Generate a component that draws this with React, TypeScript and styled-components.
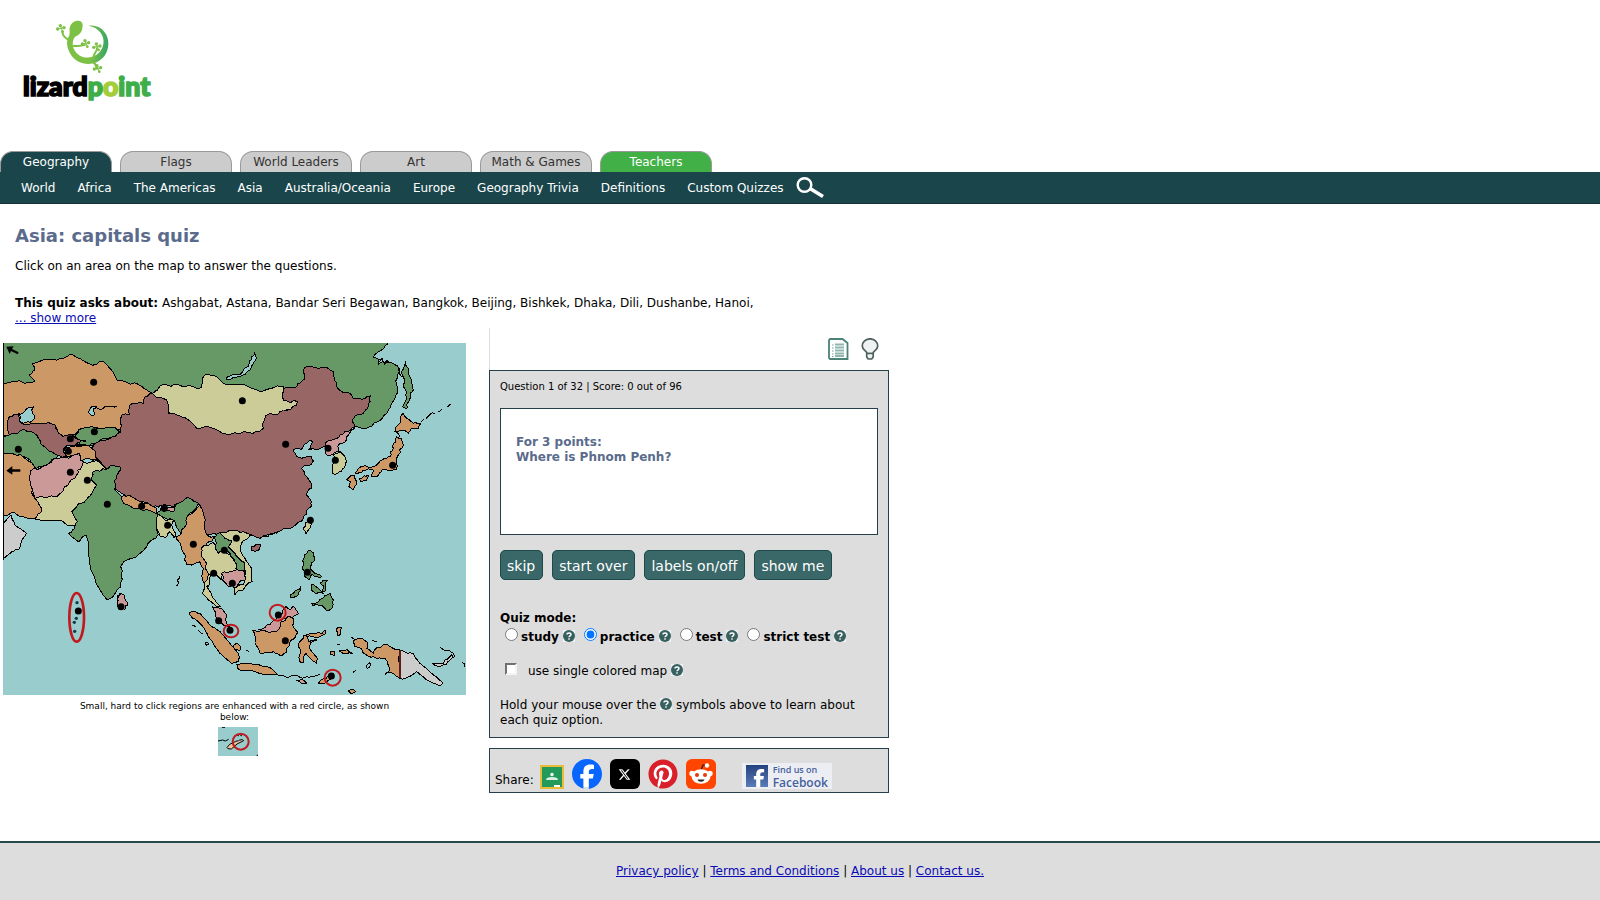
import React from "react";
import styled, { createGlobalStyle } from "styled-components";
import { FaFacebook, FaFacebookF, FaPinterest, FaXTwitter } from "react-icons/fa6";

const teal = "#1a464b";

const Global = createGlobalStyle`
  *, *::before, *::after { box-sizing: border-box; }
  body {
    margin: 0;
    background: #fff;
    color: #000;
    font-family: "DejaVu Sans", Verdana, sans-serif;
    font-size: 12px;
    line-height: 15px;
  }
  a { color: #0a0ab4; }
  svg { display: block; }
`;

const Page = styled.div`
  min-height: 100vh;
  display: flex;
  flex-direction: column;
`;

const Header = styled.header`
  padding: 16px 20px 45px;
`;

const LogoLink = styled.a`
  display: inline-block;
  vertical-align: top;
`;

const Tabs = styled.nav`
  display: flex;
  gap: 8px;
`;

const Tab = styled.a<{ $bg: string; $fg: string }>`
  width: 112px;
  height: 21px;
  border: 1px solid #999;
  border-bottom: 0;
  border-radius: 13px 13px 0 0;
  background: ${(p) => p.$bg};
  color: ${(p) => p.$fg};
  text-align: center;
  text-decoration: none;
  line-height: 20px;
`;

const SubNav = styled.nav`
  display: flex;
  align-items: center;
  gap: 22px;
  height: 32px;
  padding-left: 21px;
  background: ${teal};
  border-bottom: 1px solid #123539;
`;

const SubLink = styled.a`
  padding-top: 2px;
  color: #fff;
  text-decoration: none;
`;

const SearchButton = styled.button`
  margin: 0 0 0 -10px;
  padding: 0;
  border: 0;
  background: none;
`;

const Main = styled.main`
  flex: 1 0 auto;
`;

const Intro = styled.section`
  padding: 21px 15px 2px;
`;

const Title = styled.h1`
  margin: 0 0 12px;
  font-size: 18px;
  line-height: 22px;
  color: #5a6b8c;
`;

const Lead = styled.p`
  margin: 0 0 22px;
`;

const Asks = styled.p`
  margin: 0;
`;

const Columns = styled.div`
  display: flex;
  align-items: flex-start;
  gap: 23px;
  padding-left: 3px;
`;

const MapColumn = styled.section`
  width: 463px;
  padding-top: 15px;
  display: flex;
  flex-direction: column;
  align-items: center;
`;

const Caption = styled.p`
  width: 340px;
  margin: 6px 0 4px;
  font-size: 9px;
  line-height: 11px;
  text-align: center;
`;

const Sample = styled.div`
  padding-left: 7px;
`;

const QuizColumn = styled.section`
  width: 400px;
`;

const Tools = styled.div`
  display: flex;
  justify-content: flex-end;
  align-items: center;
  gap: 12px;
  height: 42px;
  padding-right: 10px;
  border-left: 1px solid #ddd;
`;

const IconButton = styled.button`
  padding: 0;
  border: 0;
  background: none;
`;

const Panel = styled.div`
  border: 1px solid #25404a;
  background: #ddd;
`;

const QuizPanel = styled(Panel)`
  padding: 8px 10px;
`;

const Score = styled.p`
  margin: 0 0 14px;
  font-size: 10px;
`;

const QuestionBox = styled.div`
  height: 127px;
  padding: 26px 15px;
  border: 1px solid #25404a;
  background: #fff;
  color: #5a6b8c;
  font-weight: bold;
`;

const Buttons = styled.div`
  display: flex;
  gap: 9px;
  margin: 15px 0 31px;
`;

const ActionButton = styled.button`
  height: 30px;
  padding: 2px 7px 0 6px;
  border: 1px solid #1d4a4c;
  border-radius: 5px;
  background: #3a6767;
  color: #fff;
  font-family: inherit;
  font-size: 14px;
`;

const Modes = styled.fieldset`
  margin: 0;
  padding: 0;
  border: 0;
  font-weight: bold;
`;

const Legend = styled.legend`
  padding: 0;
`;

const ModeRow = styled.div`
  display: flex;
  gap: 9px;
  padding: 2px 0 0 5px;
`;

const Option = styled.span`
  display: flex;
  align-items: flex-start;
  gap: 4px;
  > svg { margin-top: 2px; }
`;

const OptionLabel = styled.label<{ $gap: number }>`
  display: flex;
  align-items: flex-start;
  gap: ${(p) => p.$gap}px;
  line-height: 18px;
`;

const Radio = styled.input`
  width: 13px;
  height: 13px;
  margin: 0;
`;

const Check = styled.input`
  appearance: none;
  width: 12px;
  height: 12px;
  margin: 1px 0 0;
  border: 2px solid;
  border-color: #707070 #f4f4f4 #f4f4f4 #707070;
  background: #fff;
`;

const CheckRow = styled.div`
  margin-top: 16px;
  padding-left: 5px;
`;

const Help = styled.p`
  margin: 18px 0 1px;
  svg { display: inline-block; vertical-align: -1px; }
`;

const SharePanel = styled(Panel)`
  display: flex;
  align-items: flex-end;
  gap: 8px;
  height: 45px;
  margin-top: 10px;
  padding: 0 5px 3px;
`;

const ShareLabel = styled.span`
  margin-right: -2px;
  padding-bottom: 1px;
`;

const ShareLink = styled.a<{ $bg?: string; $radius?: number }>`
  display: flex;
  align-items: center;
  justify-content: center;
  width: 30px;
  height: 30px;
  background: ${(p) => p.$bg || "transparent"};
  border-radius: ${(p) => p.$radius || 0}px;
  color: #fff;
`;

const ClassroomLink = styled.a`
  display: block;
`;

const FindUs = styled.a`
  display: flex;
  align-items: center;
  gap: 5px;
  width: 90px;
  height: 26px;
  margin-left: 18px;
  padding-left: 4px;
  background: #eceef3;
  color: #45619d;
  font-family: "Open Sans", sans-serif;
  font-weight: 600;
  text-decoration: none;
`;

const FindText = styled.span`
  display: flex;
  flex-direction: column;
  font-size: 12px;
  line-height: 13px;
  small { font-size: 9px; line-height: 12px; }
`;

const FindIcon = styled.span`
  display: flex;
  align-items: flex-end;
  justify-content: flex-end;
  width: 22px;
  height: 22px;
  background: linear-gradient(#24427e, #5b7cb8);
  color: #fff;
`;

const Footer = styled.footer`
  margin-top: 48px;
  padding: 21px 0 21px;
  border-top: 2px solid #25494d;
  background: #ddd;
  text-align: center;
`;

type Pt = [number, number];

const parse = (s: string, dx = 0, dy = 0): Pt[] =>
  s.trim().split(/\s+/).map((p) => {
    const [x, y] = p.split(",").map(Number);
    return [x + dx, y + dy];
  });

/* Splits each edge at a shifted midpoint; neighbours that share an edge get the same shift. */
const roughen = (pts: Pt[], closed: boolean, passes = 2): Pt[] => {
  if (passes === 0) return pts;
  const out: Pt[] = [];
  pts.forEach((a, i) => {
    out.push(a);
    if (!closed && i === pts.length - 1) return;
    const b = pts[(i + 1) % pts.length];
    const dx = Math.abs(a[0] - b[0]);
    const dy = Math.abs(a[1] - b[1]);
    const len = Math.hypot(dx, dy);
    if (len < 10 || a[0] < 10 || b[0] < 10) return;
    const mx = (a[0] + b[0]) / 2;
    const my = (a[1] + b[1]) / 2;
    const h = Math.sin(mx * 12.9 + my * 78.2) * 43758;
    const k = ((h - Math.floor(h)) - 0.5) * Math.min(len * 0.45, 11);
    out.push([mx + (k * dy) / len, my + (k * dx) / len]);
  });
  return roughen(out, closed, passes - 1);
};

const toPoints = (pts: Pt[]) => pts.map((p) => `${p[0].toFixed(1)},${p[1].toFixed(1)}`).join(" ");

const G = "#669966";
const O = "#cc9966";
const M = "#996666";
const C = "#cccc99";
const P = "#cc9999";
const S = "#99cccc";
const L = "#cccccc";

/* fill, x shift, y shift, outline */
const lands: [string, number, number, string][] = [
  [G, 0, 0, "9,20 1165,20 1145,45 1120,66 1138,74 1135,88 1150,80 1172,82 1192,92 1200,105 1190,150 1187,182 1172,212 1160,235 1130,262 1115,275 1090,280 1065,275 700,330 9,330"],
  [C, 0, 0, "457,175 475,160 500,150 525,147 555,155 605,157 610,125 625,117 650,125 670,145 690,148 730,148 780,170 815,160 850,155 850,195 893,200 897,213 850,235 800,260 790,300 690,310 560,290"],
  [M, 0, 0, "457,175 470,188 500,195 505,235 540,243 575,262 590,280 640,280 690,298 745,292 790,280 797,243 830,240 850,225 890,212 893,200 850,195 850,160 885,158 905,140 915,120 910,105 935,95 980,97 1000,110 1010,145 1015,162 1050,175 1060,192 1090,192 1112,182 1105,215 1090,235 1062,248 1063,275 1040,292 1020,305 995,320 970,335 925,345 935,315 920,325 905,345 880,345 890,365 905,370 935,365 940,378 905,400 915,420 930,440 935,460 920,480 935,500 925,520 910,550 880,575 830,592 780,610 755,600 730,590 690,585 660,595 620,600 612,565 608,525 600,510 570,490 545,500 520,515 490,510 460,515 400,490 375,480 343,462 343,440 355,415 360,395 345,393 320,403 305,385 290,370 270,340 285,325 345,300 362,285 365,240 388,240 390,210 430,205 435,185"],
  [O, 0, 0, "5,148 45,138 75,145 105,140 88,120 105,105 97,85 150,75 190,72 210,57 235,70 265,85 290,90 310,78 330,100 350,135 385,145 410,145 440,165 457,175 435,185 430,205 390,210 388,240 365,240 362,285 290,278 235,285 220,300 190,305 180,300 165,270 105,268 95,265 60,262 28,245 28,300 5,303"],
  [M, 0, 0, "28,245 58,235 60,262 95,265 165,270 175,295 190,305 215,298 230,312 258,318 230,325 200,330 190,340 198,365 175,362 150,350 125,330 110,300 85,290 65,285 50,297 28,300"],
  [S, 0, 0, "58,240 75,228 100,215 97,235 105,242 90,262 70,265 58,260"],
  [S, 0, 0, "265,232 275,215 290,213 280,222 285,238 275,242"],
  [G, 0, 0, "5,306 28,300 50,297 65,285 85,290 110,300 125,330 150,350 175,362 160,372 145,388 110,400 97,395 90,375 60,358 30,355 5,357"],
  [G, 0, 0, "235,285 255,278 345,278 358,290 330,308 285,325 265,332 220,332 240,322 258,318 225,305"],
  [O, 0, 0, "190,340 215,335 265,332 285,348 290,372 245,378 240,360 215,362 200,365"],
  [O, 0, 0, "5,357 30,355 60,358 97,385 103,400 90,420 92,450 98,480 105,490 125,525 105,552 60,545 40,532 25,540 5,542"],
  [P, 0, 0, "103,400 140,390 160,372 195,368 238,355 242,365 240,378 250,380 245,395 230,420 205,450 170,485 105,490 92,450 90,420"],
  [C, 0, 0, "105,490 170,485 205,450 230,420 245,395 250,380 290,375 320,403 278,412 275,435 290,450 262,490 215,530 233,560 225,572 205,572 180,555 105,552 125,525"],
  [G, 0, 0, "320,403 345,393 360,395 355,415 343,440 343,462 365,485 370,500 430,520 470,535 485,515 520,518 545,500 570,490 595,505 588,520 565,540 555,575 540,600 525,560 485,545 472,540 470,570 475,600 455,615 420,655 362,695 362,745 340,783 322,795 300,765 270,690 258,600 235,620 205,595 225,572 233,560 215,530 262,490 290,450 275,435 278,412"],
  [O, 0, 0, "365,485 385,480 420,500 468,518 468,535 430,527 370,505"],
  [P, 0, 0, "485,516 522,516 522,530 490,530"],
  [C, 0, 0, "472,535 485,545 495,555 525,555 515,570 527,600 522,610 510,590 495,608 480,603 470,580"],
  [O, 0, 0, "600,510 608,525 612,565 620,600 645,605 620,625 603,640 605,660 618,690 628,720 625,755 612,745 610,700 600,680 580,688 560,688 555,660 540,625 528,605 540,600 555,575 565,540 590,518"],
  [C, 0, 0, "660,595 690,585 730,590 755,600 735,615 720,640 735,670 755,700 757,740 730,765 705,780 700,755 735,740 735,705 725,680 690,640 665,610"],
  [C, 0, 0, "603,640 640,622 655,645 690,660 705,680 715,710 670,712 665,735 640,710 630,725 620,755 640,790 662,815 650,815 625,795 608,775 612,745 628,720 618,690 605,660"],
  [G, 0, 0, "643,608 660,592 675,610 695,615 685,635 715,670 735,685 733,708 710,706 705,680 690,655 670,645 655,655 645,640 650,625"],
  [P, 0, 0, "665,715 700,708 735,710 735,735 705,758 685,755 668,735"],
  [P, 0, 0, "637,815 665,820 680,840 680,865 690,880 670,870 650,850"],
  [L, 0, 525, "5,45 33,15 45,45 80,70 55,120 30,130 5,150"],
  [P, 0, 525, "358,250 372,255 384,280 375,298 360,298 352,280"],
  [G, 690, 0, "525,78 535,100 545,140 550,165 540,175 537,200 530,222 518,215 527,180 520,150 515,110"],
  [O, 690, 0, "520,235 530,250 550,265 572,265 565,280 545,280 535,295 515,285 495,290 510,265"],
  [O, 690, 0, "500,305 515,310 520,330 505,360 500,385 500,402 480,408 455,405 440,425 425,425 430,405 400,405 375,415 385,400 430,395 445,385 455,375 480,365 490,340 498,320"],
  [O, 690, 0, "355,430 375,420 380,440 370,465 357,455 362,440 350,435"],
  [O, 690, 0, "390,430 415,420 410,435 393,440"],
  [P, 690, 0, "375,278 355,300 350,310 335,325 325,330 325,350 300,362 285,355 295,335 285,330 305,315 330,300 350,290"],
  [C, 690, 0, "310,358 330,350 345,365 347,390 335,408 308,415 308,395 312,375"],
  [C, 690, 0, "240,560 235,585 228,598 220,580 225,565"],
  [S, 690, 0, "75,50 77,75 60,105 30,125 -10,133 -10,127 30,118 55,95 65,65"],
  [M, 540, 525, "213,110 230,102 243,102 240,112 225,125 213,122"],
  [G, 540, 525, "372,135 385,122 402,130 400,155 390,175 405,190 425,200 420,204 395,192 388,210 375,200 368,170"],
  [G, 540, 525, "393,222 415,235 430,250 408,252 395,240"],
  [G, 540, 525, "430,210 443,212 438,240 425,245 432,228 420,220"],
  [G, 540, 525, "395,280 420,268 450,250 460,270 455,295 440,302 425,285 400,288"],
  [G, 540, 525, "330,262 350,240 363,228 362,240 340,262"],
  [O, 540, 525, "28,307 60,310 90,345 120,365 150,400 175,430 175,455 155,460 120,430 85,380 60,340 35,322"],
  [O, 540, 525, "162,405 175,402 183,412 178,422 165,420"],
  [O, 540, 525, "170,463 200,462 250,470 280,480 292,493 250,493 190,483 172,475"],
  [O, 540, 525, "217,360 235,365 280,360 310,335 330,320 340,325 338,345 353,368 335,390 325,410 305,437 280,425 240,430 225,400"],
  [P, 540, 525, "235,360 260,345 290,325 318,290 330,300 340,288 355,310 338,323 310,325 295,360 260,365"],
  [O, 540, 525, "370,375 400,370 425,372 438,360 435,375 415,382 380,380 385,395 412,390 390,405 395,425 412,445 410,460 395,450 378,430 370,458 360,455 362,430 355,410"],
  [O, 540, 525, "470,355 485,352 482,372 475,378"],
  [O, 540, 525, "478,423 500,418 517,430 500,430"],
  [O, 540, 525, "450,425 465,425 463,436 452,434"],
  [O, 540, 525, "415,520 425,508 445,498 460,490 455,503 430,520"],
  [P, 540, 525, "350,512 370,510 380,520 365,520"],
  [O, 540, 525, "520,392 545,385 560,395 560,415 580,430 610,403 660,420 660,505 640,490 615,493 628,475 615,445 580,440 550,430 545,415 525,410"],
  [L, 540, 525, "660,420 700,430 720,460 755,490 788,518 780,528 740,510 710,485 690,500 660,505"],
  [L, 540, 525, "757,460 790,460 815,435 820,442 800,462 765,466"],
  [O, 540, 525, "505,543 520,538 527,545 512,550"],
  [S, 540, 525, "558,470 570,458 572,465 562,476"],
  [S, 540, 525, "76,398 83,396 85,404 79,406"],
];

const strokes: [number, number, string][] = [
  [0, 0, "285,216 310,220 335,214 350,213"],
  [690, 0, "500,290 508,305"],
  [690, 0, "575,260 583,253"],
  [690, 0, "588,250 600,238 616,235"],
  [690, 0, "625,230 637,221"],
  [690, 0, "650,215 662,206"],
  [690, 0, "508,100 515,125"],
  [690, 0, "448,80 456,68 462,90 470,75 477,82"],
  [540, 525, "780,412 800,422 820,430 825,442"],
  [540, 525, "846,458 855,462 852,472"],
  [540, 525, "295,495 315,500 345,498 375,502 400,500 420,495"],
  [540, 525, "512,382 522,387"],
  [540, 525, "575,392 592,395"],
  [540, 525, "470,403 480,405"],
  [540, 525, "520,490 527,482"],
  [540, 525, "35,345 48,350"],
  [540, 525, "55,362 68,372"],
  [540, 525, "198,420 206,424"],
  [540, 525, "250,80 275,70 295,68"],
  [0, 525, "530,228 533,210 538,198"],
  [0, 525, "350,262 362,252"],
];

const capitals =
  "281,142 211,311 283,290 55,343 205,349 211,412 262,436 322,508 425,514 493,520 503,571 727,197 857,328 984,340 1006,376 1178,391 931,556 580,628 673,646 709,610 641,715 697,745 922,712 363,815 235,828 656,857 690,886 835,840 856,917 994,1023";

function AsiaMap() {
  return (
    <svg width="463" height="352" viewBox="9 24 1389 1056" role="img" aria-label="Map of Asia">
      <rect x="9" y="24" width="1389" height="1056" fill={S} />
      <g stroke="#000" strokeWidth="3" strokeLinejoin="round" shapeRendering="crispEdges">
        {lands.map(([fill, dx, dy, s], i) => (
          <polygon key={i} fill={fill} points={toPoints(roughen(parse(s, dx, dy), true))} />
        ))}
        {strokes.map(([dx, dy, s], i) => (
          <polyline key={i} fill="none" points={toPoints(roughen(parse(s, dx, dy), false))} />
        ))}
        <path d="M1200 945v85" stroke="#5c1a1a" strokeWidth="4" />
        <path d="M10.500 24V675" />
      </g>
      {parse(capitals).map(([x, y]) => (
        <circle key={`${x}-${y}`} cx={x} cy={y} r="10.500" />
      ))}
      <g fill="#123a4a">
        <circle cx="231" cy="803" r="5" />
        <circle cx="229" cy="850" r="5" />
        <circle cx="223" cy="862" r="5" />
        <circle cx="224" cy="889" r="5" />
      </g>
      <path d="M19 35l22-1-5 8 20 10-3 6-20-10-4 9zM19 407l18-14v10h24v7H37v9z" />
      <g fill="none" stroke="#c01a1f" strokeWidth="6">
        <ellipse cx="230" cy="847" rx="22" ry="73" strokeWidth="8" />
        <ellipse cx="693" cy="888" rx="22" ry="19" />
        <circle cx="833" cy="833" r="24" />
        <circle cx="998" cy="1028" r="24" />
      </g>
    </svg>
  );
}

function SampleMap() {
  return (
    <svg width="40" height="29" viewBox="0 0 120 87" role="img" aria-label="Region with a red circle">
      <rect width="120" height="87" fill={S} />
      <g stroke="#000" strokeWidth="3" fill="none">
        <path d="M0 42l14-3 8 3 10-5" />
        <path d="M27 62l8-10 15-7 22-8 5 4-20 10-17 15-10-1z" fill="#f2c79a" />
        <path d="M48 44l25-6" stroke="#556" />
        <path d="M12 1h9M55 22l8 5M64 22l8 5M116 85h4" />
      </g>
      <circle cx="68" cy="44" r="24" fill="none" stroke="#c01a1f" strokeWidth="6" />
    </svg>
  );
}

const Toes = ({ x, y }: { x: number; y: number }) => (
  <g>
    <circle cx={x - 10} cy={y} r="5" />
    <circle cx={x - 2} cy={y - 10} r="5" />
    <circle cx={x + 9} cy={y - 4} r="5" />
    <circle cx={x + 5} cy={y + 8} r="4" />
    <path d={`M${x - 10} ${y}L${x + 9} ${y - 4}M${x - 2} ${y - 10}L${x + 5} ${y + 8}`} stroke="#7cc144" strokeWidth="3" />
  </g>
);

function Logo() {
  return (
    <svg width="134" height="90" viewBox="60 48 402 270" role="img" aria-label="lizardpoint">
      <defs>
        <linearGradient id="tail" x1="0" x2="1" y1="0" y2="0">
          <stop offset="0.550" stopColor="#7cc144" />
          <stop offset="1" stopColor="#35a566" />
        </linearGradient>
      </defs>
      <path
        d="M210 80C215 66 228 61 239 63C250 66 249 78 246 89C243 101 233 106 225 110C215 123 216 143 229 158C248 179 280 177 299 156C323 128 310 85 265 77C312 70 338 119 319 158C297 202 235 203 211 161C201 145 198 126 205 112C213 100 206 91 210 80Z"
        fill="url(#tail)"
      />
      <g fill="none" stroke="#7cc144" strokeWidth="6">
        <path d="M210 119C198 118 188 108 186 92M219 137C234 140 248 137 257 134M281 178C276 160 293 158 291 142M279 188C292 190 285 203 293 208" />
      </g>
      <g fill="#7cc144">
        <Toes x={183} y={87} />
        <Toes x={257} y={132} />
        <Toes x={291} y={142} />
        <Toes x={293} y={207} />
      </g>
      <text
        x="69"
        y="289"
        fontFamily="'Liberation Sans Narrow', 'Lato', sans-serif"
        fontWeight="900"
        fontSize="80"
        strokeWidth="5"
        fill="#000"
        stroke="#000"
      >
        lizard
        <tspan fill="#3fae49" stroke="#3fae49">p</tspan>
        <tspan fill="#a4cd39" stroke="#a4cd39">o</tspan>
        <tspan fill="#3fae49" stroke="#3fae49">int</tspan>
      </text>
    </svg>
  );
}

const HelpIcon = () => (
  <svg width="12" height="12" viewBox="0 0 12 12" role="img" aria-label="help">
    <rect width="12" height="12" fill="#eef3f3" />
    <circle cx="6" cy="6" r="6" fill="#38605f" />
    <path d="M4 4.600C4 2.500 8 2.500 8 4.600C8 5.900 6 5.900 6 7.300M6 8.300v1.400" fill="none" stroke="#fff" strokeWidth="1.400" />
  </svg>
);

const SearchIcon = () => (
  <svg width="28" height="22" viewBox="0 0 28 22" fill="none" stroke="#fff">
    <circle cx="8.500" cy="8" r="6.800" strokeWidth="2.400" />
    <path d="M14 11.500L27 19.500" strokeWidth="3.600" />
  </svg>
);

const NotesIcon = () => (
  <svg width="21" height="22" viewBox="0 0 21 22" fill="none" stroke="#4a8377">
    <path d="M2 1h12.500l5 4v16H2L1 20V2z" strokeWidth="1.800" />
    <path d="M7 6.500h9M7 9.500h9M7 12.500h9M7 15.500h9M7 18h9" stroke="#8fb5ae" strokeWidth="1.800" />
    <path d="M4 7h1.500M4 10h1.500M4 13h1.500M4 16h1.500M4 18.500h1.500" stroke="#72a399" />
  </svg>
);

const BulbIcon = () => (
  <svg width="18" height="22" viewBox="0 0 18 22" fill="#eef3f2" stroke="#4d5f5e" strokeWidth="1.700">
    <path d="M6 15.500C6 12.500 1.300 12.500 1.300 8A7.500 7 0 0 1 16.700 8C16.700 12.500 12 12.500 12 15.500Z" />
    <path d="M5.700 15.500h6.500v3.500l-1.500 2h-3.500l-1.500-2z" />
  </svg>
);

const ClassroomIcon = () => (
  <svg width="24" height="24" viewBox="0 0 24 24">
    <rect width="24" height="24" fill="#e9bd3a" />
    <rect x="2" y="2" width="20" height="20" fill="#23995a" />
    <circle cx="12" cy="9.500" r="1.700" fill="#fff" />
    <path d="M6 15c0-2 2-3 6-3s6 1 6 3z" fill="#d8efe2" />
    <rect x="14" y="20" width="6" height="2" fill="#fff" />
  </svg>
);

const RedditIcon = () => (
  <svg width="30" height="30" viewBox="0 0 30 30">
    <rect width="30" height="30" rx="6" fill="#ff4500" />
    <path d="M15 11l2-5 4 1" fill="none" stroke="#3a1a10" strokeWidth="1.200" />
    <circle cx="21" cy="6.500" r="2.200" fill="#fff" />
    <circle cx="6" cy="14.500" r="2.700" fill="#fff" />
    <circle cx="24" cy="14.500" r="2.700" fill="#fff" />
    <ellipse cx="15" cy="17.500" rx="9.500" ry="7.300" fill="#fff" />
    <circle cx="11" cy="16" r="2" fill="#e03c10" />
    <circle cx="19" cy="16" r="2" fill="#e03c10" />
    <path d="M11.500 20.500h7c-1 3-6 3-7 0z" fill="#222" />
  </svg>
);

const tabs: [string, string, string][] = [
  ["Geography", teal, "#fff"],
  ["Flags", "#ccc", "#333"],
  ["World Leaders", "#ccc", "#333"],
  ["Art", "#ccc", "#333"],
  ["Math & Games", "#ccc", "#333"],
  ["Teachers", "#41b046", "#fff"],
];

const regions = ["World", "Africa", "The Americas", "Asia", "Australia/Oceania", "Europe", "Geography Trivia", "Definitions", "Custom Quizzes"];
const modes = ["study", "practice", "test", "strict test"];
const actions = ["skip", "start over", "labels on/off", "show me"];

export default function App() {
  return (
    <Page>
      <Global />
      <Header>
        <LogoLink href="#"><Logo /></LogoLink>
      </Header>
      <Tabs>
        {tabs.map(([name, bg, fg]) => (
          <Tab key={name} href="#" $bg={bg} $fg={fg}>{name}</Tab>
        ))}
      </Tabs>
      <SubNav>
        {regions.map((r) => (
          <SubLink key={r} href="#">{r}</SubLink>
        ))}
        <SearchButton aria-label="Search"><SearchIcon /></SearchButton>
      </SubNav>
      <Main>
        <Intro>
          <Title>Asia: capitals quiz</Title>
          <Lead>Click on an area on the map to answer the questions.</Lead>
          <Asks>
            <b>This quiz asks about:</b> Ashgabat, Astana, Bandar Seri Begawan, Bangkok, Beijing, Bishkek, Dhaka, Dili, Dushanbe, Hanoi,
            <br />
            <a href="#">... show more</a>
          </Asks>
        </Intro>
        <Columns>
          <MapColumn>
            <AsiaMap />
            <Caption>Small, hard to click regions are enhanced with a red circle, as shown below:</Caption>
            <Sample><SampleMap /></Sample>
          </MapColumn>
          <QuizColumn>
            <Tools>
              <IconButton aria-label="Notes"><NotesIcon /></IconButton>
              <IconButton aria-label="Hint"><BulbIcon /></IconButton>
            </Tools>
            <QuizPanel>
              <Score>Question 1 of 32 | Score: 0 out of 96</Score>
              <QuestionBox>
                For 3 points:
                <br />
                Where is Phnom Penh?
              </QuestionBox>
              <Buttons>
                {actions.map((a) => (
                  <ActionButton key={a}>{a}</ActionButton>
                ))}
              </Buttons>
              <Modes>
                <Legend>Quiz mode:</Legend>
                <ModeRow>
                  {modes.map((m) => (
                    <Option key={m}>
                      <OptionLabel $gap={3}>
                        <Radio type="radio" name="mode" defaultChecked={m === "practice"} />
                        {m}
                      </OptionLabel>
                      <HelpIcon />
                    </Option>
                  ))}
                </ModeRow>
              </Modes>
              <CheckRow>
                <Option>
                  <OptionLabel $gap={11}>
                    <Check type="checkbox" />
                    use single colored map
                  </OptionLabel>
                  <HelpIcon />
                </Option>
              </CheckRow>
              <Help>
                Hold your mouse over the <HelpIcon /> symbols above to learn about
                <br />
                each quiz option.
              </Help>
            </QuizPanel>
            <SharePanel>
              <ShareLabel>Share:</ShareLabel>
              <ClassroomLink href="#" aria-label="Google Classroom"><ClassroomIcon /></ClassroomLink>
              <ShareLink href="#" aria-label="Facebook" $bg="radial-gradient(#fff 60%, transparent 62%)" $radius={15}>
                <FaFacebook size={30} color="#0866ff" />
              </ShareLink>
              <ShareLink href="#" aria-label="X" $bg="#000" $radius={6}><FaXTwitter size={13} /></ShareLink>
              <ShareLink href="#" aria-label="Pinterest" $bg="radial-gradient(#fff 60%, transparent 62%)" $radius={15}>
                <FaPinterest size={30} color="#d9202a" />
              </ShareLink>
              <ShareLink href="#" aria-label="Reddit"><RedditIcon /></ShareLink>
              <FindUs href="#">
                <FindIcon><FaFacebookF size={18} /></FindIcon>
                <FindText>
                  <small>Find us on</small>
                  <span>Facebook</span>
                </FindText>
              </FindUs>
            </SharePanel>
          </QuizColumn>
        </Columns>
      </Main>
      <Footer>
        <a href="#">Privacy policy</a> | <a href="#">Terms and Conditions</a> | <a href="#">About us</a> | <a href="#">Contact us.</a>
      </Footer>
    </Page>
  );
}
